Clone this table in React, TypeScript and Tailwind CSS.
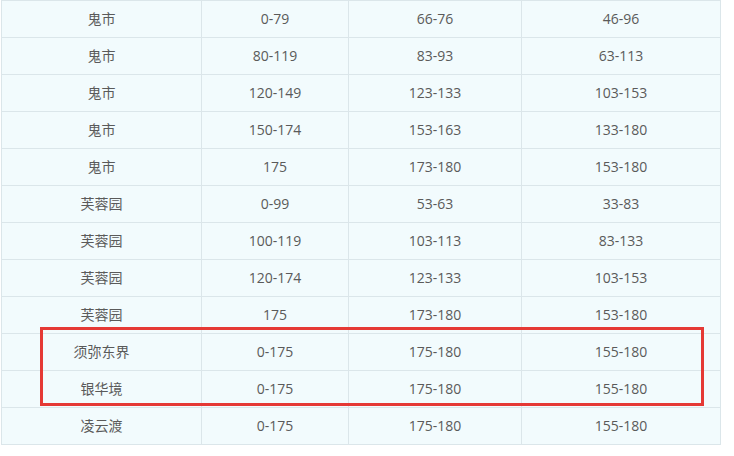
const rows: [string, string, string, string][] = [
  ["鬼市", "0-79", "66-76", "46-96"],
  ["鬼市", "80-119", "83-93", "63-113"],
  ["鬼市", "120-149", "123-133", "103-153"],
  ["鬼市", "150-174", "153-163", "133-180"],
  ["鬼市", "175", "173-180", "153-180"],
  ["芙蓉园", "0-99", "53-63", "33-83"],
  ["芙蓉园", "100-119", "103-113", "83-133"],
  ["芙蓉园", "120-174", "123-133", "103-153"],
  ["芙蓉园", "175", "173-180", "153-180"],
  ["须弥东界", "0-175", "175-180", "155-180"],
  ["银华境", "0-175", "175-180", "155-180"],
  ["凌云渡", "0-175", "175-180", "155-180"],
];

const widths = ["w-[200px]", "w-[147px]", "w-[173px]", "w-[199px]"];

export default function App() {
  return (
    <div className="relative h-[456px] w-[734px] bg-white text-[14px] text-[#5a5a5a] [font-family:'Open_Sans','Noto_Sans_CJK_SC',sans-serif]">
      <div className="ml-px w-[720px] border-l border-t border-[#dbe6ea] bg-[#f2fbfd]">
        {rows.map((r, i) => (
          <div key={i} className="flex h-[37px] border-b border-[#dbe6ea]">
            {r.map((c, j) => (
              <div
                key={j}
                className={`${widths[j]} flex items-center justify-center border-r border-[#dbe6ea] pb-[2px]`}
              >
                {c}
              </div>
            ))}
          </div>
        ))}
      </div>
      {/* highlight box */}
      <div className="absolute left-[40px] top-[327px] h-[79px] w-[664px] border-[3px] border-[#e53935]" />
    </div>
  );
}
